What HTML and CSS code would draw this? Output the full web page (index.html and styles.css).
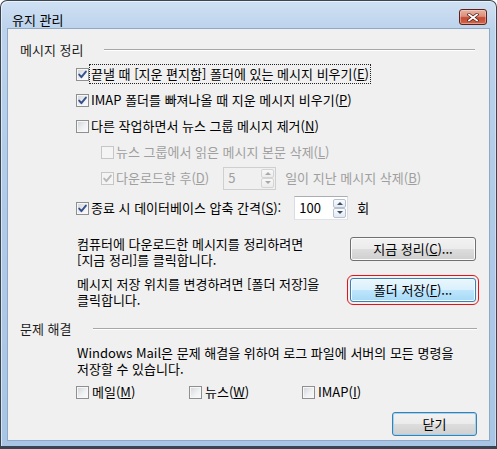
FILE: index.html
```html
<!DOCTYPE html>
<html lang="ko">
<head>
<meta charset="utf-8">
<title>유지 관리</title>
<link rel="stylesheet" href="styles.css">
</head>
<body>
<div class="window">
  <div class="titlebar">
    <span class="title">유지 관리</span>
    <span class="close">
      <svg width="12" height="9" viewBox="0 0 12 9">
        <path d="M2 1.5 L10 7.5 M10 1.5 L2 7.5" stroke="#4a1a12" stroke-width="3.2" stroke-linecap="square"/>
        <path d="M2 1.5 L10 7.5 M10 1.5 L2 7.5" stroke="#ffffff" stroke-width="1.8" stroke-linecap="square"/>
      </svg>
    </span>
  </div>
  <div class="client">
    <div class="group-head"><span class="gh-text">메시지 정리</span><span class="rule r-a"></span></div>

    <div class="row first">
      <span class="cb checked"><svg viewBox="0 0 11 11"><path d="M2.2 5.6 L4.4 8.2 L8.9 2.6"/></svg></span>
      <span class="label focus">끝낼 때 [지운 편지함] 폴더에 있는 메시지 비우기(<u>E</u>)</span>
    </div>
    <div class="row">
      <span class="cb checked"><svg viewBox="0 0 11 11"><path d="M2.2 5.6 L4.4 8.2 L8.9 2.6"/></svg></span>
      <span class="label">IMAP 폴더를 빠져나올 때 지운 메시지 비우기(<u>P</u>)</span>
    </div>
    <div class="row">
      <span class="cb"></span>
      <span class="label">다른 작업하면서 뉴스 그룹 메시지 제거(<u>N</u>)</span>
    </div>
    <div class="row indent">
      <span class="cb disabled"></span>
      <span class="label dim">뉴스 그룹에서 읽은 메시지 본문 삭제(<u>L</u>)</span>
    </div>
    <div class="row indent">
      <span class="cb checked disabled"><svg viewBox="0 0 11 11"><path d="M2.2 5.6 L4.4 8.2 L8.9 2.6"/></svg></span>
      <span class="label dim">다운로드한 후(<u>D</u>)</span>
      <span class="spin disabled s1">
        <span class="val">5</span>
        <span class="arrows"><span class="arr up"></span><span class="arr down"></span></span>
      </span>
      <span class="after dim">일이 지난 메시지 삭제(<u>B</u>)</span>
    </div>
    <div class="row r6">
      <span class="cb checked"><svg viewBox="0 0 11 11"><path d="M2.2 5.6 L4.4 8.2 L8.9 2.6"/></svg></span>
      <span class="label">종료 시 데이터베이스 압축 간격(<u>S</u>):</span>
      <span class="spin s2">
        <span class="val">100</span>
        <span class="arrows"><span class="arr up"></span><span class="arr down"></span></span>
      </span>
      <span class="after">회</span>
    </div>

    <div class="para p1">
      <p class="ptext">컴퓨터에 다운로드한 메시지를 정리하려면<br>[지금 정리]를 클릭합니다.</p>
      <button class="btn side b1">지금 정리(<u>C</u>)...</button>
    </div>
    <div class="para p2">
      <p class="ptext">메시지 저장 위치를 변경하려면 [폴더 저장]을<br>클릭합니다.</p>
      <button class="btn side hot marked b2">폴더 저장(<u>F</u>)...</button>
    </div>

    <div class="group-head g2"><span class="gh-text">문제 해결</span><span class="rule r-b"></span></div>
    <p class="ptext p3">Windows Mail은 문제 해결을 위하여 로그 파일에 서버의 모든 명령을<br>저장할 수 있습니다.</p>
    <div class="opts">
      <span class="opt"><span class="cb"></span><span class="label">메일(<u>M</u>)</span></span>
      <span class="opt"><span class="cb"></span><span class="label">뉴스(<u>W</u>)</span></span>
      <span class="opt"><span class="cb"></span><span class="label">IMAP(<u>I</u>)</span></span>
    </div>
    <div class="footer">
      <button class="btn default close-btn">닫기</button>
    </div>
  </div>
</div>
</body>
</html>
```
FILE: styles.css
```css
html, body {
  margin: 0;
  padding: 0;
}
body {
  width: 497px;
  height: 449px;
  overflow: hidden;
  background: #ffffff;
  font-family: "Noto Sans CJK KR", "Noto Sans", sans-serif;
  font-size: 13px;
  line-height: 16px;
  color: #000;
}
.window {
  width: 497px;
  height: 449px;
  box-sizing: border-box;
  border: 1px solid #3b4552;
  border-bottom-width: 3px;
  border-radius: 7px 7px 0 0;
  background: linear-gradient(to bottom, #cfe0f3 0px, #bcd3ec 28px, #b0cbe8 200px, #a9c5e5 100%);
  box-shadow: inset 1px 1px 0 rgba(255,255,255,0.55), inset -1px 0 0 rgba(255,255,255,0.4);
  display: flex;
  flex-direction: column;
  padding: 0 6px 5px 6px;
}
.titlebar {
  height: 27px;
  flex: none;
  display: flex;
  align-items: flex-start;
  justify-content: space-between;
}
.title {
  margin-top: 11px;
  margin-left: 5px;
  color: #000;
}
.close {
  margin-top: 8px;
  margin-right: 3px;
  width: 28px;
  height: 16px;
  box-sizing: border-box;
  border: 1px solid #5b2219;
  border-radius: 3px;
  background: linear-gradient(to bottom, #e9b3a4 0%, #dc8e7b 45%, #c54a33 55%, #d0674c 100%);
  box-shadow: inset 0 0 0 1px rgba(255,220,210,0.45);
  display: flex;
  align-items: center;
  justify-content: center;
}
.close svg { display: block; }
.client {
  flex: 1;
  box-sizing: border-box;
  border: 1px solid #8fa8c5;
  background: #f0f0f0;
  display: flex;
  flex-direction: column;
}
.group-head {
  margin-top: 13px;
  height: 16px;
  display: flex;
  align-items: center;
  padding-left: 12px;
  padding-right: 14px;
  color: #1c1c1c;
}
.rule {
  flex: 1;
  height: 1px;
  background: #a7a7a7;
  border-bottom: 1px solid #ffffff;
}
.r-a { margin-left: 21px; }
.r-b { margin-left: 22px; }
.g2 { margin-top: 13px; padding-right: 12px; }
.row {
  height: 26px;
  display: flex;
  align-items: center;
  padding-left: 68px;
}
.row.first { margin-top: 3px; }
.row.indent { padding-left: 93px; }
.row.r6 { margin-top: 4px; }
.cb {
  width: 13px;
  height: 13px;
  flex: none;
  box-sizing: border-box;
  border: 1px solid #8e8f8f;
  background: linear-gradient(135deg, #d0d3d8 0%, #eef0f2 55%, #fbfbfb 100%);
  box-shadow: inset 0 0 0 1px #f7f7f7;
  display: flex;
  align-items: center;
  justify-content: center;
}
.cb svg {
  width: 11px;
  height: 11px;
  display: block;
}
.cb svg path {
  fill: none;
  stroke: #35508a;
  stroke-width: 1.9;
  stroke-linecap: round;
  stroke-linejoin: round;
}
.cb.disabled {
  border-color: #c6c6c6;
  background: #f4f4f4;
  box-shadow: none;
}
.cb.disabled svg path { stroke: #b9b9b9; }
.label {
  margin-left: 1px;
  padding: 1px 1px;
  white-space: nowrap;
}
.label.focus {
  outline: 1px dotted #222;
  outline-offset: 0;
}
.dim { color: #9f9f9f; }
.after { white-space: nowrap; }
.spin {
  box-sizing: border-box;
  height: 23px;
  border: 1px solid #abadb3;
  border-bottom-color: #dfe3e8;
  border-left-color: #dadde3;
  border-right-color: #dadde3;
  background: #ffffff;
  display: flex;
  align-items: center;
  padding-left: 4px;
  flex: none;
}
.spin .val { flex: 1; }
.spin.disabled {
  background: #f0f0f0;
  border-color: #cfcfcf;
  color: #9f9f9f;
}
.s1 { width: 53px; margin-left: 13px; margin-right: 9px; }
.s2 { width: 54px; height: 24px; margin-left: 12px; margin-right: 9px; }
.arrows {
  width: 13px;
  height: 19px;
  margin-right: 1px;
  display: flex;
  flex-direction: column;
}
.arr {
  flex: 1;
  box-sizing: border-box;
  border: 1px solid #b4c2d3;
  border-radius: 2px;
  background: linear-gradient(to bottom, #fbfcfd, #e4eaf1);
  display: flex;
  align-items: center;
  justify-content: center;
}
.arr::after {
  content: "";
  width: 0;
  height: 0;
  border-left: 3px solid transparent;
  border-right: 3px solid transparent;
}
.arr.up::after { border-bottom: 3px solid #3d4e66; }
.arr.down::after { border-top: 3px solid #3d4e66; }
.spin.disabled .arr {
  border-color: #d4d4d4;
  background: linear-gradient(to bottom, #f8f8f8, #ececec);
}
.spin.disabled .arr.up::after { border-bottom-color: #a8a8a8; }
.spin.disabled .arr.down::after { border-top-color: #a8a8a8; }
.para {
  display: flex;
  align-items: flex-start;
  justify-content: space-between;
  padding-left: 69px;
  padding-right: 13px;
}
.p1 { margin-top: 15px; }
.p2 { margin-top: 8px; }
.ptext {
  margin: 0;
  white-space: nowrap;
}
.p3 { margin-top: 8px; padding-left: 69px; }
.btn {
  box-sizing: border-box;
  border: 1px solid #707070;
  border-radius: 3px;
  background: linear-gradient(to bottom, #f2f2f2 0%, #ebebeb 50%, #dddddd 51%, #cfcfcf 100%);
  box-shadow: inset 0 0 0 1px #fbfbfb;
  font: inherit;
  color: #000;
  padding: 0;
  display: flex;
  align-items: center;
  justify-content: center;
}
.side { width: 126px; height: 24px; }
.b1 { margin-top: 1px; }
.b2 { margin-top: 2px; }
.btn.hot {
  border-color: #3c7fb1;
  background: linear-gradient(to bottom, #eaf6fd 0%, #d9f0fc 50%, #bee6fd 51%, #a7d9f5 100%);
  box-shadow: inset 0 0 0 1px #f5fbfe;
}
.btn.marked {
  outline: 1px solid #e2131a;
  outline-offset: 2px;
}
.btn.default {
  border-color: #3c7fb1;
  box-shadow: inset 0 0 0 1px #9fd3f0;
}
.opts {
  margin-top: 7px;
  height: 16px;
  display: flex;
  align-items: center;
  padding-left: 68px;
}
.opt {
  width: 113px;
  display: flex;
  align-items: center;
}
.opt .label { margin-left: 2px; }
.footer {
  margin-top: 12px;
  display: flex;
  justify-content: flex-end;
  padding-right: 12px;
}
.close-btn { width: 85px; height: 24px; }
```
